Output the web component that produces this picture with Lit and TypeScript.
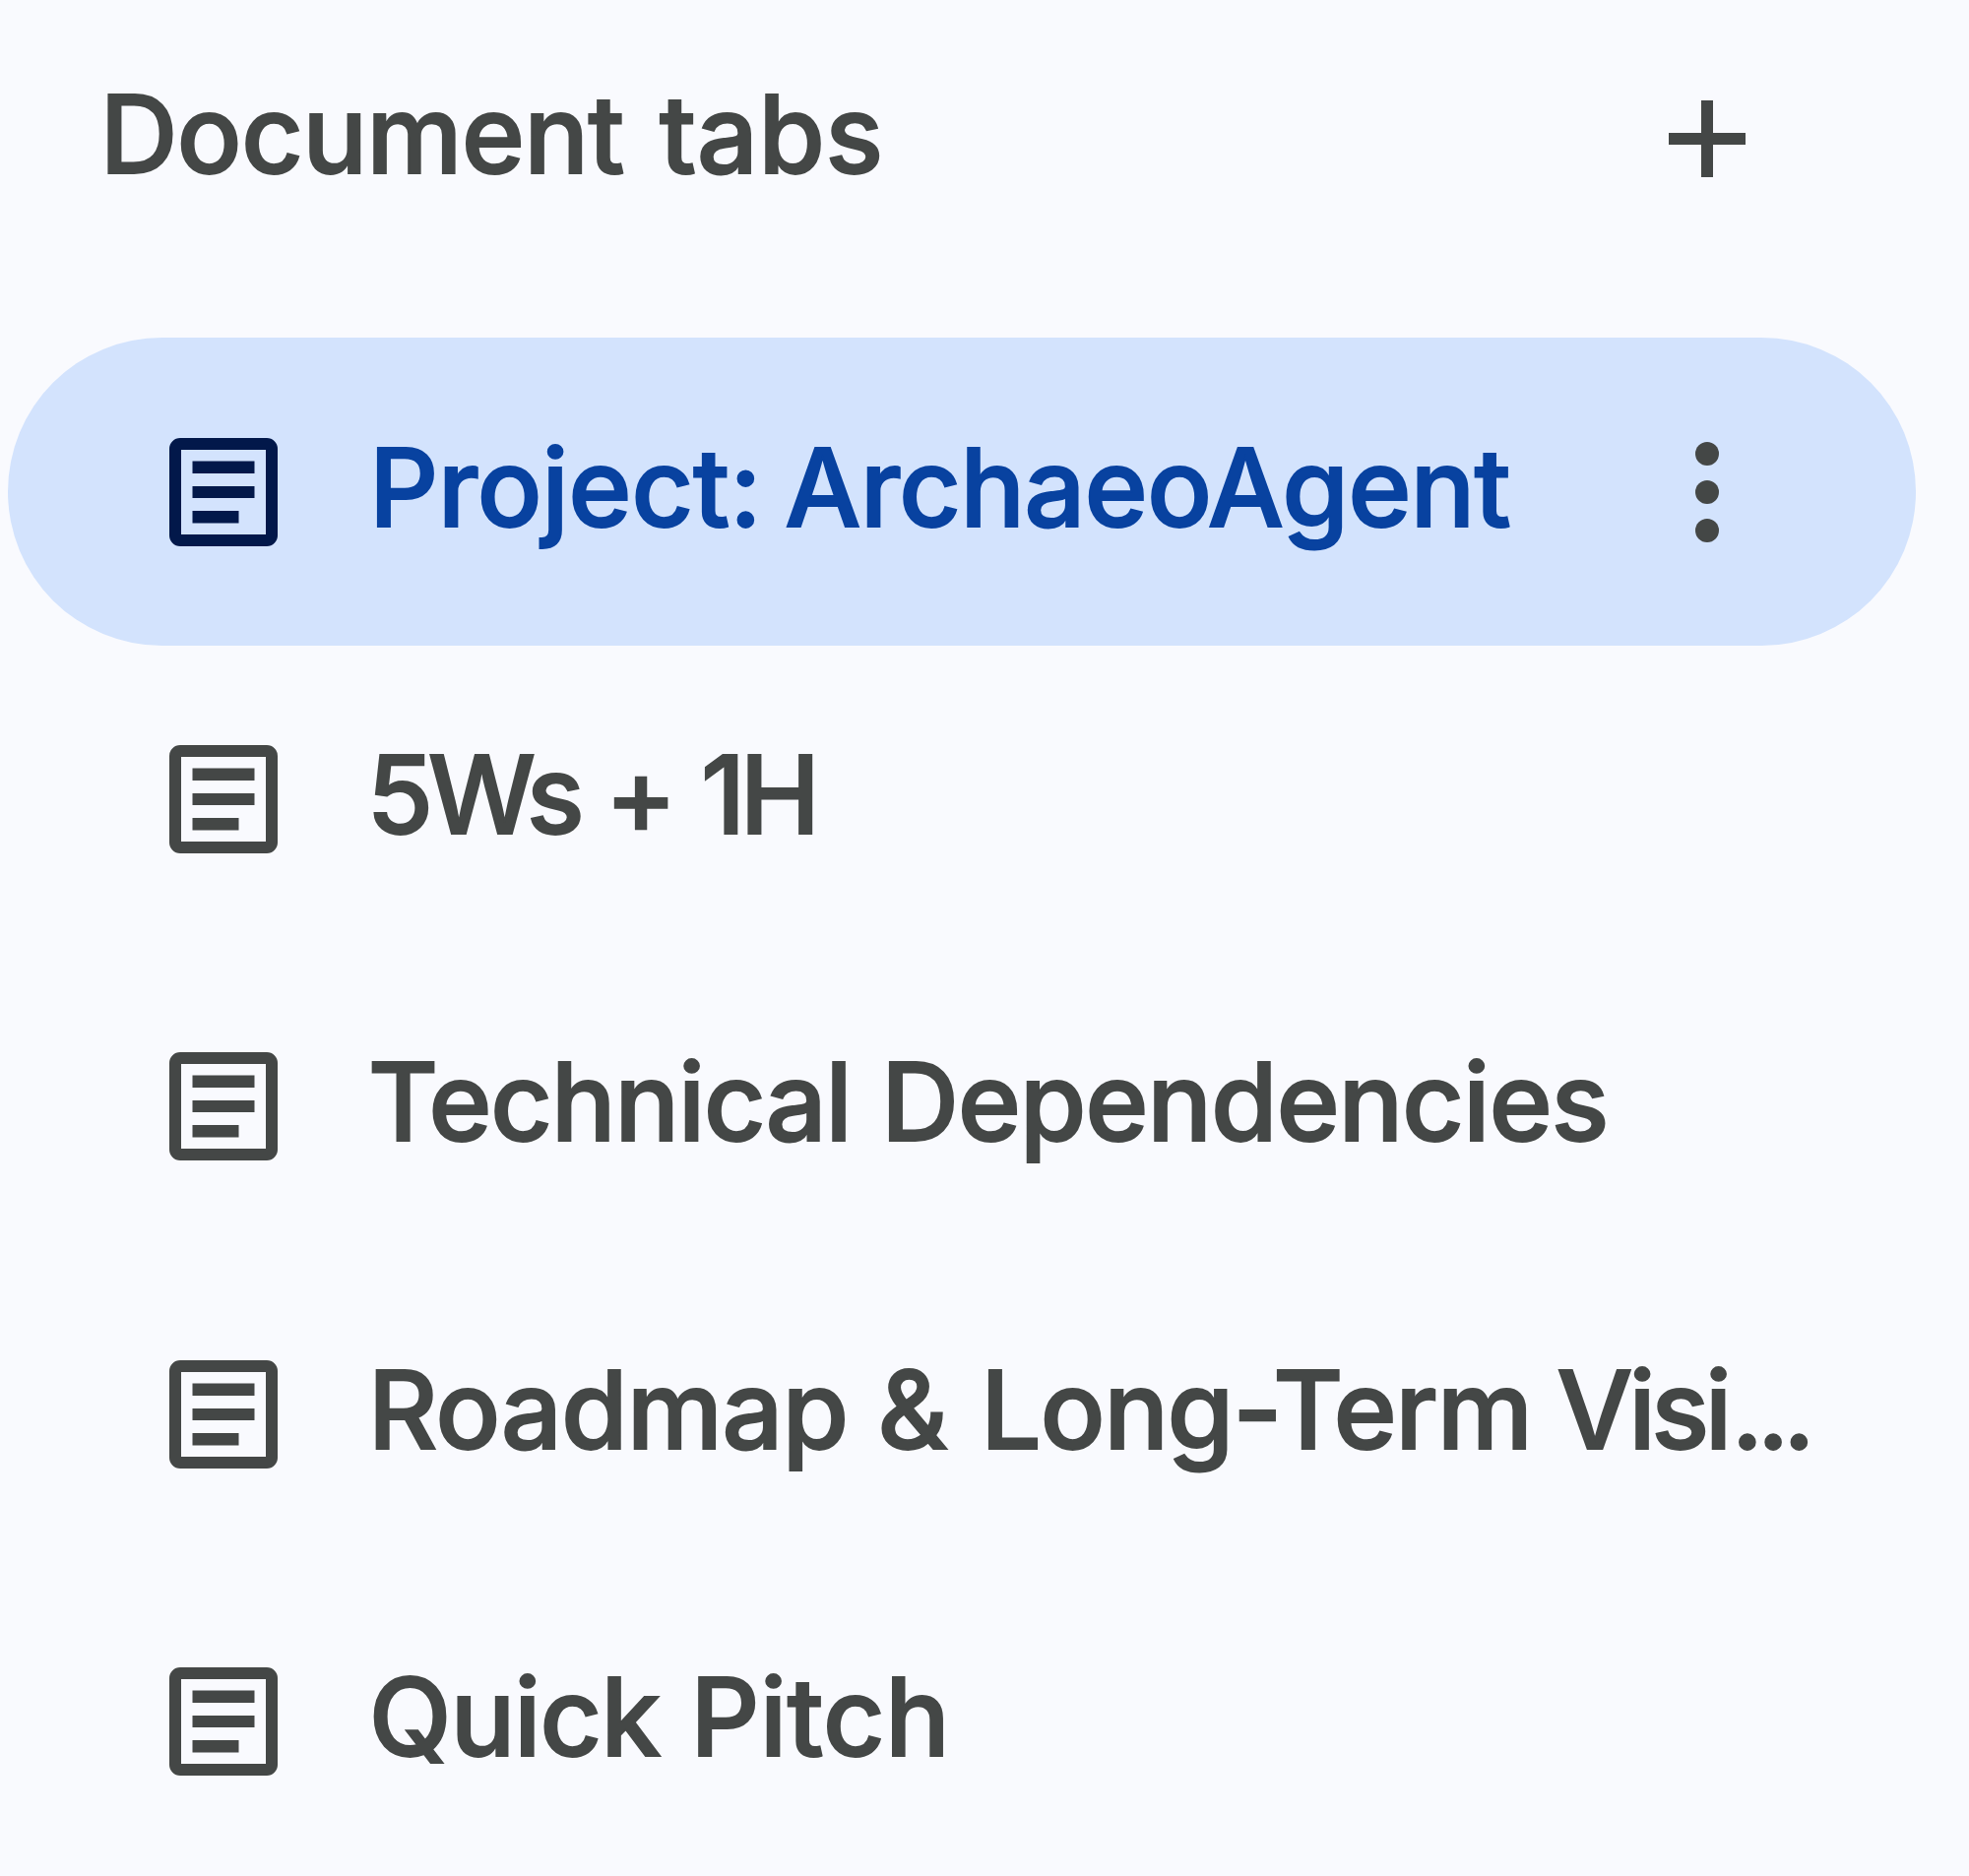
import { LitElement, html, svg, css, nothing } from "lit";
import { customElement, property } from "lit/decorators.js";
import { classMap } from "lit/directives/class-map.js";

/** A piece of a label: its text, tracking, offset, and whether it joins the piece before it. */
interface Word {
  text: string;
  tracking: number;
  offset: number;
  joined?: boolean;
}

interface Tab {
  words: Word[];
  selected?: boolean;
}

const HEADING: Word[] = [
  { text: "Document", tracking: -0.9, offset: 1.4 },
  { text: "tabs", tracking: 0.25, offset: 6.9 },
];

const TABS: Tab[] = [
  {
    selected: true,
    words: [
      { text: "Project:", tracking: -0.5, offset: 3.4 },
      { text: "ArchaeoAgent", tracking: -1.0, offset: -5.6 },
    ],
  },
  {
    words: [
      { text: "5Ws", tracking: -5.9, offset: 1.1 },
      { text: "+", tracking: 0, offset: -2.6 },
      { text: "1H", tracking: -5.8, offset: -5.2 },
    ],
  },
  {
    words: [
      { text: "Technical", tracking: -1.5, offset: 2.2 },
      { text: "Dependencies", tracking: -1.3, offset: 1.3 },
    ],
  },
  {
    words: [
      { text: "Roadmap", tracking: -0.9, offset: 2.2 },
      { text: "&", tracking: 0, offset: 0.6 },
      { text: "Long-Term", tracking: -1.5, offset: 3.9 },
      { text: "Visi", tracking: -4.6, offset: -3.6 },
      { text: "...", tracking: -6.9, offset: 3.5, joined: true },
    ],
  },
  {
    words: [
      { text: "Quick", tracking: -1.3, offset: 3 },
      { text: "Pitch", tracking: 0.1, offset: 1.8 },
    ],
  },
];

@customElement("tab-label")
class TabLabel extends LitElement {
  @property({ attribute: false }) words: Word[] = [];

  static styles = css`
    :host {
      display: block;
      white-space: pre;
      font: 500 109.6px/134px Inter, Roboto, sans-serif;
      -webkit-text-stroke: 1.8px currentColor;
      padding-bottom: 10px;
    }
  `;

  render() {
    return this.words.map(
      (w, i) => html`${i > 0 && !w.joined ? " " : nothing}<span style="letter-spacing:${w.tracking}px;margin-left:${w.offset}px">${w.text}</span>`
    );
  }
}

@customElement("app-root")
class AppRoot extends LitElement {
  static styles = css`
    :host {
      display: block;
      box-sizing: border-box;
      height: 1906px;
      overflow: hidden;
      background: #f9fafe;
      color: #444746;
    }
    .panel {
      display: flex;
      flex-direction: column;
      gap: 62.4px;
      width: 1937.5px;
      padding-left: 8px;
    }
    .header {
      display: flex;
      align-items: center;
      box-sizing: border-box;
      height: 281px;
      padding: 0 171.5px 0 92px;
    }
    .list {
      display: flex;
      flex-direction: column;
    }
    .row {
      display: flex;
      align-items: center;
      gap: 90px;
      height: 312.4px;
      padding: 0 171.5px 0 163.5px;
      box-sizing: border-box;
      border-radius: 157px;
    }
    .row.selected {
      background: #d3e3fd;
    }
    .row.selected tab-label {
      color: #0842a0;
    }
    .row.selected .page {
      color: #02184a;
    }
    tab-label {
      flex: 1;
      min-width: 0;
    }
    svg {
      display: block;
      flex: none;
      fill: currentColor;
    }
    .page {
      width: 110px;
      height: 110px;
    }
    .action {
      display: flex;
      padding: 0;
      border: 0;
      background: none;
      color: inherit;
    }
    .action svg {
      width: 80px;
      height: 110px;
    }
  `;

  private pageIcon() {
    return html`<svg class="page" viewBox="0 0 110 110">
      <path fill-rule="evenodd" d="M11 0H99A11 11 0 0 1 110 11V99A11 11 0 0 1 99 110H11A11 11 0 0 1 0 99V11A11 11 0 0 1 11 0ZM12 12V98H98V12Z" />
      <path d="M23.5 23.5H86.5V36H23.5ZM23.5 49H86.5V61H23.5ZM23.5 74H70.5V86.5H23.5Z" />
    </svg>`;
  }

  private moreIcon() {
    return html`<svg viewBox="0 0 80 110">
      ${[16, 55, 94].map((y) => svg`<circle cx="40" cy=${y} r="12" />`)}
    </svg>`;
  }

  render() {
    return html`
      <div class="panel">
        <div class="header">
          <tab-label .words=${HEADING}></tab-label>
          <button class="action" aria-label="Add tab">
            <svg viewBox="0 0 80 110">
              <path d="M34 16H46V49H79V61H46V94H34V61H1V49H34Z" />
            </svg>
          </button>
        </div>
        <div class="list">
          ${TABS.map(
            (tab) => html`
              <div class=${classMap({ row: true, selected: !!tab.selected })}>
                ${this.pageIcon()}
                <tab-label .words=${tab.words}></tab-label>
                ${tab.selected
                  ? html`<button class="action" aria-label="Tab options">${this.moreIcon()}</button>`
                  : nothing}
              </div>
            `
          )}
        </div>
      </div>
    `;
  }
}
